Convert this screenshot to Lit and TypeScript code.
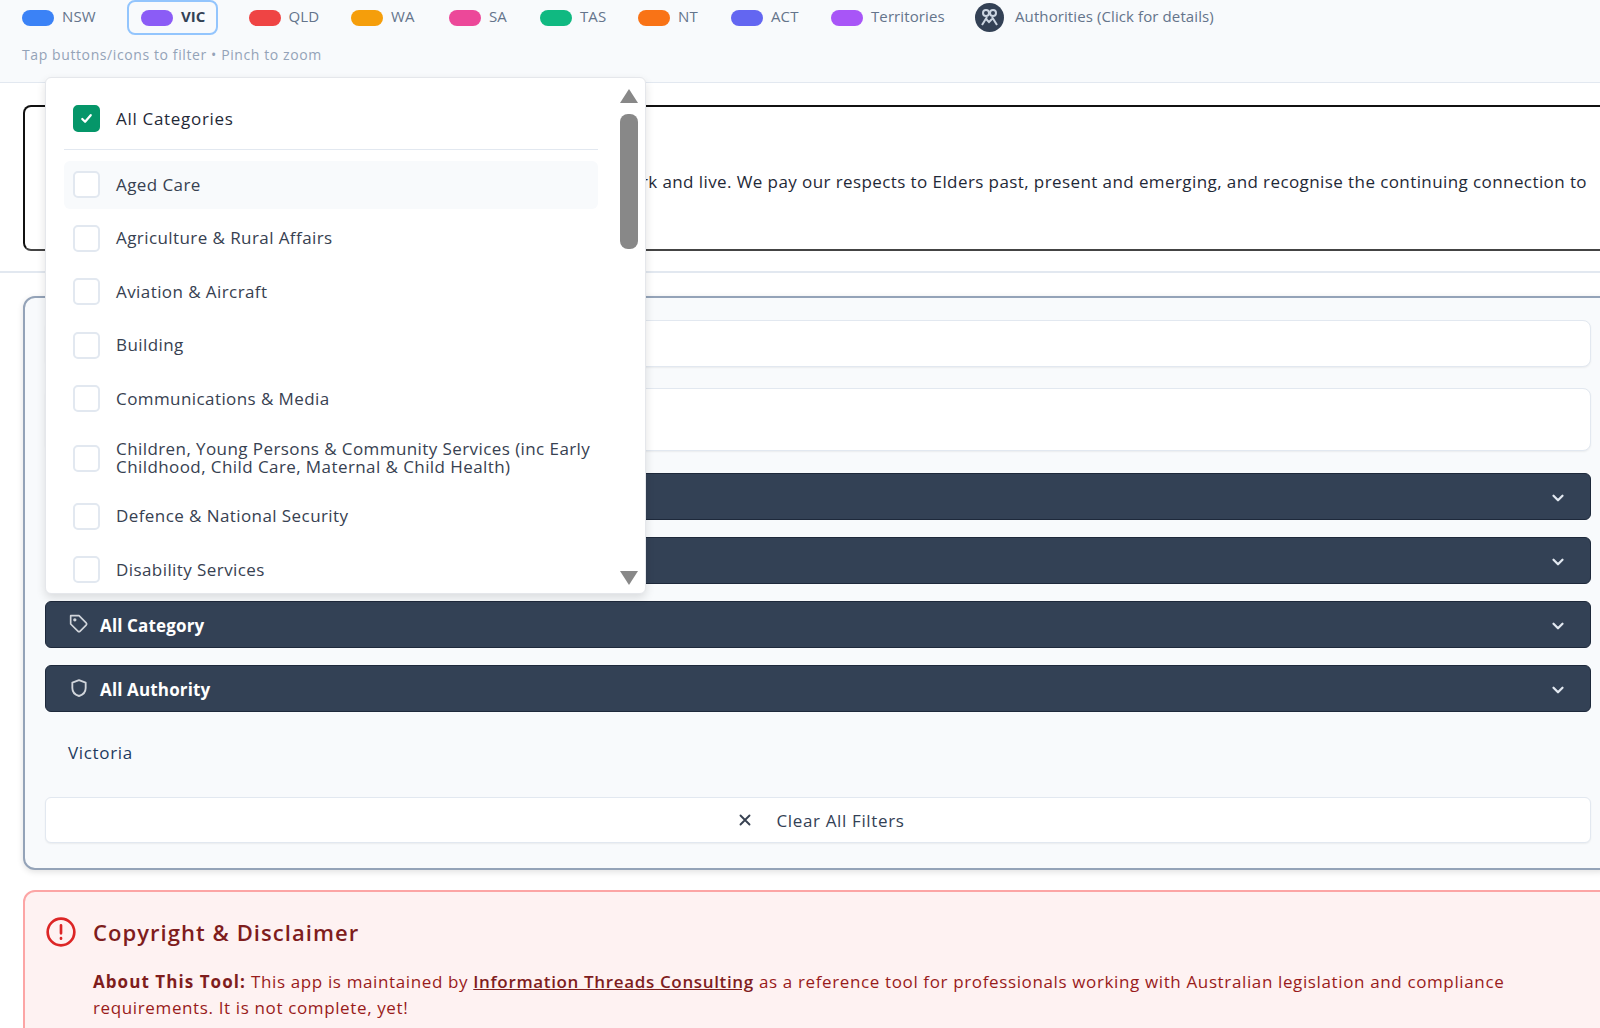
import { LitElement, html, css } from "lit";
import { customElement } from "lit/decorators.js";

const LEGEND: [string, string, number][] = [
  ["NSW", "#3b82f6", 105], ["VIC", "#8b5cf6", 121.5], ["QLD", "#ef4444", 102.5], ["WA", "#f59e0b", 98], ["SA", "#ec4899", 91],
  ["TAS", "#10b981", 98], ["NT", "#f97316", 93], ["ACT", "#6366f1", 100], ["Territories", "#a855f7", 144],
];
const CATS = [
  "Aged Care", "Agriculture & Rural Affairs", "Aviation & Aircraft", "Building", "Communications & Media",
  "Children, Young Persons & Community Services (inc Early Childhood, Child Care, Maternal & Child Health)",
  "Defence & National Security", "Disability Services",
];
const chevron = html`<svg class="chev" viewBox="0 0 24 24" fill="none" stroke="currentColor" stroke-width="3" stroke-linecap="round" stroke-linejoin="round"><path d="M6 9l6 6 6-6"/></svg>`;
const tag = html`<svg class="bi" viewBox="0 0 24 24" fill="none" stroke="#d1d5db" stroke-width="2" stroke-linecap="round" stroke-linejoin="round"><path d="M20.6 13.4l-7.2 7.2a2 2 0 0 1-2.8 0L2 12V2h10l8.6 8.6a2 2 0 0 1 0 2.8z"/><circle cx="7" cy="7" r="1"/></svg>`;
const shield = html`<svg class="bi" viewBox="0 0 24 24" fill="none" stroke="#d1d5db" stroke-width="2.2" stroke-linecap="round" stroke-linejoin="round"><path d="M12 2.5l8 3v6.5c0 5-3.4 8.3-8 9.6-4.6-1.3-8-4.6-8-9.6V5.5z"/></svg>`;

@customElement("app-root")
export class AppRoot extends LitElement {
  static styles = css`
    :host { display: block; width: 1600px; height: 1028px; overflow: hidden; position: relative; background: #fff;
      font-family: "Open Sans", "Noto Sans", sans-serif; color: #1f2937; }
    .page { width: 1640px; }
    header { background: #f8fafc; border-bottom: 1px solid #e2e8f0; height: 83px; box-sizing: border-box; padding-left: 22px; display: flex; flex-direction: column; }
    .legend { display: flex; align-items: center; height: 35px; }
    .li { display: flex; align-items: center; gap: 8px; font-size: 15px; color: #64748b; letter-spacing: 0.1px; white-space: nowrap; flex: none; box-sizing: border-box; }
    .li .t { margin-bottom: 3px; }
    .pill { width: 32px; height: 16px; border-radius: 8px; flex: none; }
    .li.on { height: 35px; padding: 0 0 0 14px; color: #334155; font-weight: 700; letter-spacing: 0; position: relative; }
    .li.on::before { content: ""; position: absolute; left: 0; top: 0; bottom: 0; width: 91px; box-sizing: border-box; border: 2px solid #93c5fd; border-radius: 8px; }
    .auth { gap: 11px; }
    .auth svg { width: 29px; height: 29px; flex: none; }
    .hint { margin-top: 10px; font-size: 14px; color: #94a3b8; letter-spacing: 0.6px; line-height: 20px; }
    .ack-wrap { padding: 22px 23px 0; border-bottom: 2px solid #e2e8f0; height: 190px; box-sizing: border-box; }
    .ack { border: 2px solid #111; border-bottom-color: #444; border-radius: 8px; height: 146px; box-sizing: border-box; display: flex; align-items: center; justify-content: flex-end; padding: 8px 28px 0 0; }
    .ack p { margin: 0; font-size: 17px; line-height: 24px; color: #1f2937; white-space: nowrap; letter-spacing: .41px; }
    .panel { margin: 23px 6px 0 23px; width: 1588px; height: 574px; box-sizing: border-box; background: #f8fafc; border: 2px solid #94a3b8; border-radius: 12px; box-shadow: 0 2px 6px rgba(0,0,0,.12); padding: 22px 20px 0; display: flex; flex-direction: column; }
    .field { width: 1546px; flex: none; background: #fff; border: 1px solid #e2e8f0; border-radius: 8px; box-sizing: border-box; box-shadow: 0 1px 2px rgba(0,0,0,.06); }
    .f1 { height: 47px; margin-bottom: 21px; }
    .f2 { height: 63px; margin-bottom: 22px; }
    .bar { width: 1546px; height: 47px; flex: none; box-sizing: border-box; background: #334155; border: 1px solid #1e293b; border-radius: 6px; margin-bottom: 17.1px; color: #fff; display: flex; align-items: center; padding: 2px 23px 0 23px; font-weight: 700; font-size: 17px; letter-spacing: .15px; }
    .bar .bi { width: 20px; height: 20px; margin: -3px 11px 0 0; flex: none; }
    .bar .chev { width: 18px; height: 18px; margin-left: auto; color: #e2e8f0; }
    .vic { font-size: 17px; color: #1e3a5f; padding-left: 23px; height: 20px; line-height: 20px; margin-top: 14px; letter-spacing: .66px; }
    .clear { width: 1546px; height: 46px; margin-top: 34px; flex: none; box-sizing: border-box; background: #fff; border: 1px solid #e2e8f0; border-radius: 6px; display: flex; align-items: center; justify-content: center; gap: 23px; color: #334155; font-size: 17px; box-shadow: 0 1px 2px rgba(0,0,0,.06); padding-left: 4px; letter-spacing: .64px; }
    .clear svg { width: 18px; height: 18px; flex: none; }
    .notice { margin: 20px 0 0 23px; width: 1700px; height: 220px; box-sizing: border-box; background: #fef2f2; border: 2px solid #fca5a5; border-radius: 12px; padding: 22px 20px; }
    .nh { display: flex; align-items: center; gap: 16px; height: 36px; }
    .nh svg { width: 32px; height: 32px; flex: none; }
    .nh h3 { margin: 0; font-size: 22px; font-weight: 600; color: #7f1d1d; letter-spacing: 1.05px; }
    .notice p { margin: 19px 0 0 48px; width: 1445px; font-size: 17px; line-height: 25.6px; color: #991b1b; letter-spacing: .63px; }
    .notice b { color: #7f1d1d; letter-spacing: 1.06px; }
    .notice a { color: #7f1d1d; font-weight: 600; text-decoration: underline; letter-spacing: .65px; }

    .dd { position: absolute; left: 45px; top: 77px; width: 601px; height: 517px; background: #fff; border: 1px solid #e5e7eb; box-sizing: border-box; border-radius: 6px; box-shadow: 0 4px 10px rgba(0,0,0,.12); overflow: hidden; padding: 0 0 0 18px; }
    .row { display: flex; align-items: center; gap: 16px; width: 534px; box-sizing: border-box; padding: 0 4px 0 9px; min-height: 48px; margin-bottom: 5.6px; border-radius: 6px; font-size: 17px; color: #374151; line-height: 18px; letter-spacing: .42px; }
    .row.all { height: 72px; padding-top: 10px; margin-bottom: 10.5px; border-bottom: 1px solid #e2e8f0; border-radius: 0; color: #1f2937; letter-spacing: .7px; }
    .row.hov { background: #f8fafc; }
    .row.two { min-height: 58px; padding-top: 2px; }
    .box { width: 27px; height: 27px; box-sizing: border-box; border: 2px solid #e2e8f0; border-radius: 5px; flex: none; background: #fff; display: flex; align-items: center; justify-content: center; }
    .box.on { background: #059669; border-color: #059669; }
    .box svg { width: 15px; height: 15px; }
    .sb { position: absolute; right: 7px; top: 0; bottom: 0; width: 18px; }
    .thumb { position: absolute; top: 36px; left: 0; width: 18px; height: 135px; border-radius: 8px; background: #888; }
    .arr { position: absolute; left: 0; width: 0; height: 0; border-left: 9px solid transparent; border-right: 9px solid transparent; }
    .up { top: 11px; border-bottom: 14px solid #888; }
    .down { bottom: 8px; border-top: 14px solid #888; }
  `;
  render() {
    return html`<div class="page">
      <header>
        <div class="legend">
          ${LEGEND.map(([n, c, w], i) => html`<div class="li ${i === 1 ? "on" : ""}" style="width:${w}px"><span class="pill" style="background:${c}"></span><span class="t">${n}</span></div>`)}
          <div class="li auth">
            <svg viewBox="0 0 29 29"><circle cx="14.5" cy="14.5" r="14.5" fill="#334155"/><g fill="none" stroke="#cbd5e1" stroke-width="2"><circle cx="11" cy="10" r="3"/><circle cx="18" cy="10" r="3"/><path d="M7 22l5-8M22 22l-5-8M11 16l3 3 3-3"/></g></svg>
            <span class="t">Authorities (Click for details)</span>
          </div>
        </div>
        <div class="hint">Tap buttons/icons to filter • Pinch to zoom</div>
      </header>
      <div class="ack-wrap"><div class="ack"><p>We acknowledge Traditional Owners of the land where we work and live. We pay our respects to Elders past, present and emerging, and recognise the continuing connection to</p></div></div>
      <section class="panel">
        <div class="field f1"></div>
        <div class="field f2"></div>
        <div class="bar">${chevron}</div>
        <div class="bar">${chevron}</div>
        <div class="bar">${tag}All Category${chevron}</div>
        <div class="bar">${shield}All Authority${chevron}</div>
        <div class="vic">Victoria</div>
        <div class="clear"><svg viewBox="0 0 24 24" fill="none" stroke="#374151" stroke-width="2.5" stroke-linecap="round"><path d="M6 6l12 12M18 6L6 18"/></svg>Clear All Filters</div>
      </section>
      <section class="notice">
        <div class="nh"><svg viewBox="0 0 24 24" fill="none" stroke="#dc2626" stroke-width="2" stroke-linecap="round"><circle cx="12" cy="12" r="10"/><path d="M12 7v6M12 16.5v.5"/></svg><h3>Copyright &amp; Disclaimer</h3></div>
        <p><b>About This Tool:</b> This app is maintained by <a>Information Threads Consulting</a> as a reference tool for professionals working with Australian legislation and compliance requirements. It is not complete, yet!</p>
      </section>
    </div>
    <div class="dd">
      <div class="row all"><span class="box on"><svg viewBox="0 0 16 16" fill="none" stroke="#fff" stroke-width="2.4" stroke-linecap="round" stroke-linejoin="round"><path d="M3.5 8.5l3 3 6-7"/></svg></span>All Categories</div>
      ${CATS.map((c, i) => html`<div class="row ${i === 0 ? "hov" : ""} ${i === 5 ? "two" : ""}"><span class="box"></span><span>${c}</span></div>`)}
      <div class="sb"><span class="arr up"></span><span class="thumb"></span><span class="arr down"></span></div>
    </div>`;
  }
}
